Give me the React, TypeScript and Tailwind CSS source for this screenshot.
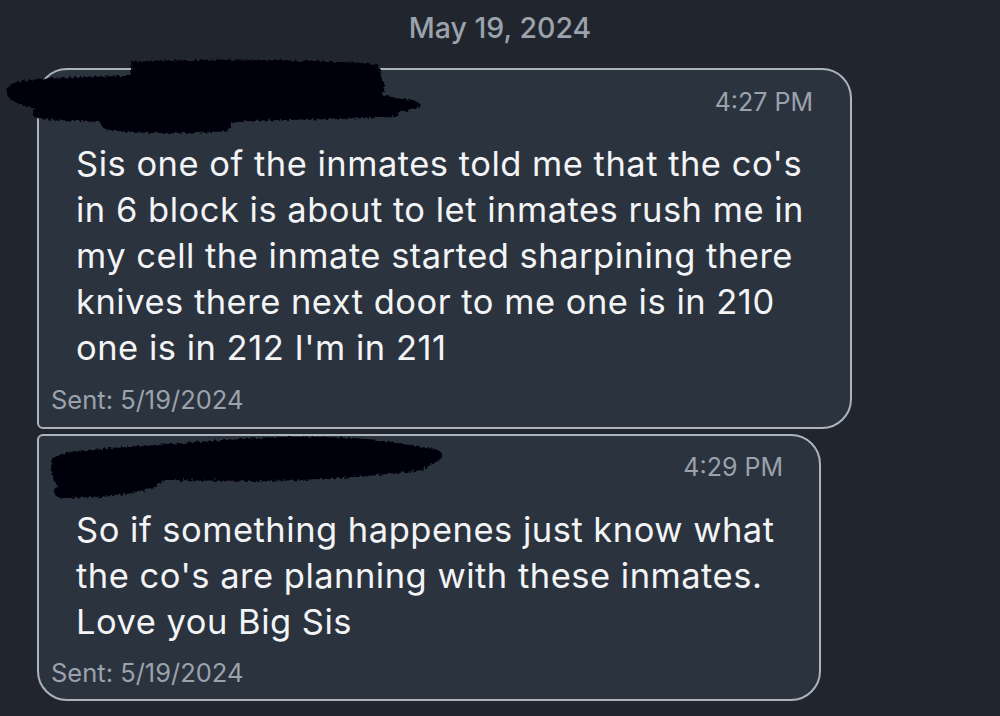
import React from "react";

const font = { fontFamily: "Inter, 'Noto Sans', sans-serif" };

function Scribbles() {
  return (
    <svg
      className="absolute left-0 top-0 pointer-events-none"
      width="1000"
      height="716"
      viewBox="0 0 1000 716"
    >
      <defs>
        <filter id="rough" x="-5%" y="-20%" width="110%" height="140%">
          <feTurbulence type="fractalNoise" baseFrequency="0.35" numOctaves="2" seed="3" result="n" />
          <feDisplacementMap in="SourceGraphic" in2="n" scale="5" />
        </filter>
      </defs>
      <g fill="#060607" filter="url(#rough)">
        <path d="M 8 88 C 8 80, 40 77, 130 76 L 132 62 C 200 58, 330 60, 378 64 L 382 80 C 386 84, 385 90, 382 95 L 402 99 C 418 100, 424 104, 418 108 L 398 113 L 396 117 C 300 121, 250 119, 232 123 L 228 131 C 180 135, 120 133, 104 129 L 100 122 L 40 119 C 30 116, 30 111, 36 108 C 10 104, 4 96, 8 88 Z" />
        <path d="M 52 462 C 52 452, 80 450, 127 447 C 200 442, 250 437, 300 437 C 340 437, 370 438, 390 442 L 430 448 C 445 450, 445 458, 436 462 L 422 470 C 380 476, 320 480, 262 481 L 165 480 C 160 486, 140 494, 100 497 L 62 498 C 52 496, 52 490, 58 486 C 52 480, 50 472, 52 462 Z" />
      </g>
    </svg>
  );
}

export default function App() {
  return (
    <div
      className="relative w-[1000px] h-[716px] overflow-hidden bg-[#20252e]"
      style={font}
    >
      <div className="flex flex-col">
        <div className="pt-[12px] h-[56px] text-center text-[28.5px] font-medium leading-[32px] text-[#9ba2ab]">
          May 19, 2024
        </div>
        <div className="ml-[37px] mt-[12px] w-[815px] rounded-tl-[30px] rounded-tr-[30px] rounded-br-[30px] rounded-bl-[6px] border-2 border-[#abb3bd] bg-[#2b333f]">
          <div className="pt-[18px] pr-[37px] text-right text-[25px] leading-[28px] text-[#9ba2ab]">
            4:27 PM
          </div>
          <div className="mt-[25px] pl-[37px] whitespace-nowrap text-[34.5px] tracking-[0.5px] leading-[46px] text-[#f3f4f6]">
            Sis one of the inmates told me that the co's
            <br />
            in 6 block is about to let inmates rush me in
            <br />
            my cell the inmate started sharpining there
            <br />
            knives there next door to me one is in 210
            <br />
            one is in 212 I'm in 211
          </div>
          <div className="mt-[14px] pl-[12px] pb-[12px] text-[25.5px] leading-[30px] text-[#9ba2ab]">
            Sent: 5/19/2024
          </div>
        </div>
        <div className="ml-[37px] mt-[5px] w-[784px] rounded-tl-[6px] rounded-tr-[30px] rounded-br-[30px] rounded-bl-[30px] border-2 border-[#abb3bd] bg-[#2b333f]">
          <div className="pt-[17px] pr-[36px] text-right text-[25px] leading-[28px] text-[#9ba2ab]">
            4:29 PM
          </div>
          <div className="mt-[26px] pl-[37px] whitespace-nowrap text-[34.5px] tracking-[0.5px] leading-[46px] text-[#f3f4f6]">
            So if something happenes just know what
            <br />
            the co's are planning with these inmates.
            <br />
            Love you Big Sis
          </div>
          <div className="mt-[13px] pl-[12px] pb-[11px] text-[25.5px] leading-[30px] text-[#9ba2ab]">
            Sent: 5/19/2024
          </div>
        </div>
      </div>
      <Scribbles />
    </div>
  );
}
